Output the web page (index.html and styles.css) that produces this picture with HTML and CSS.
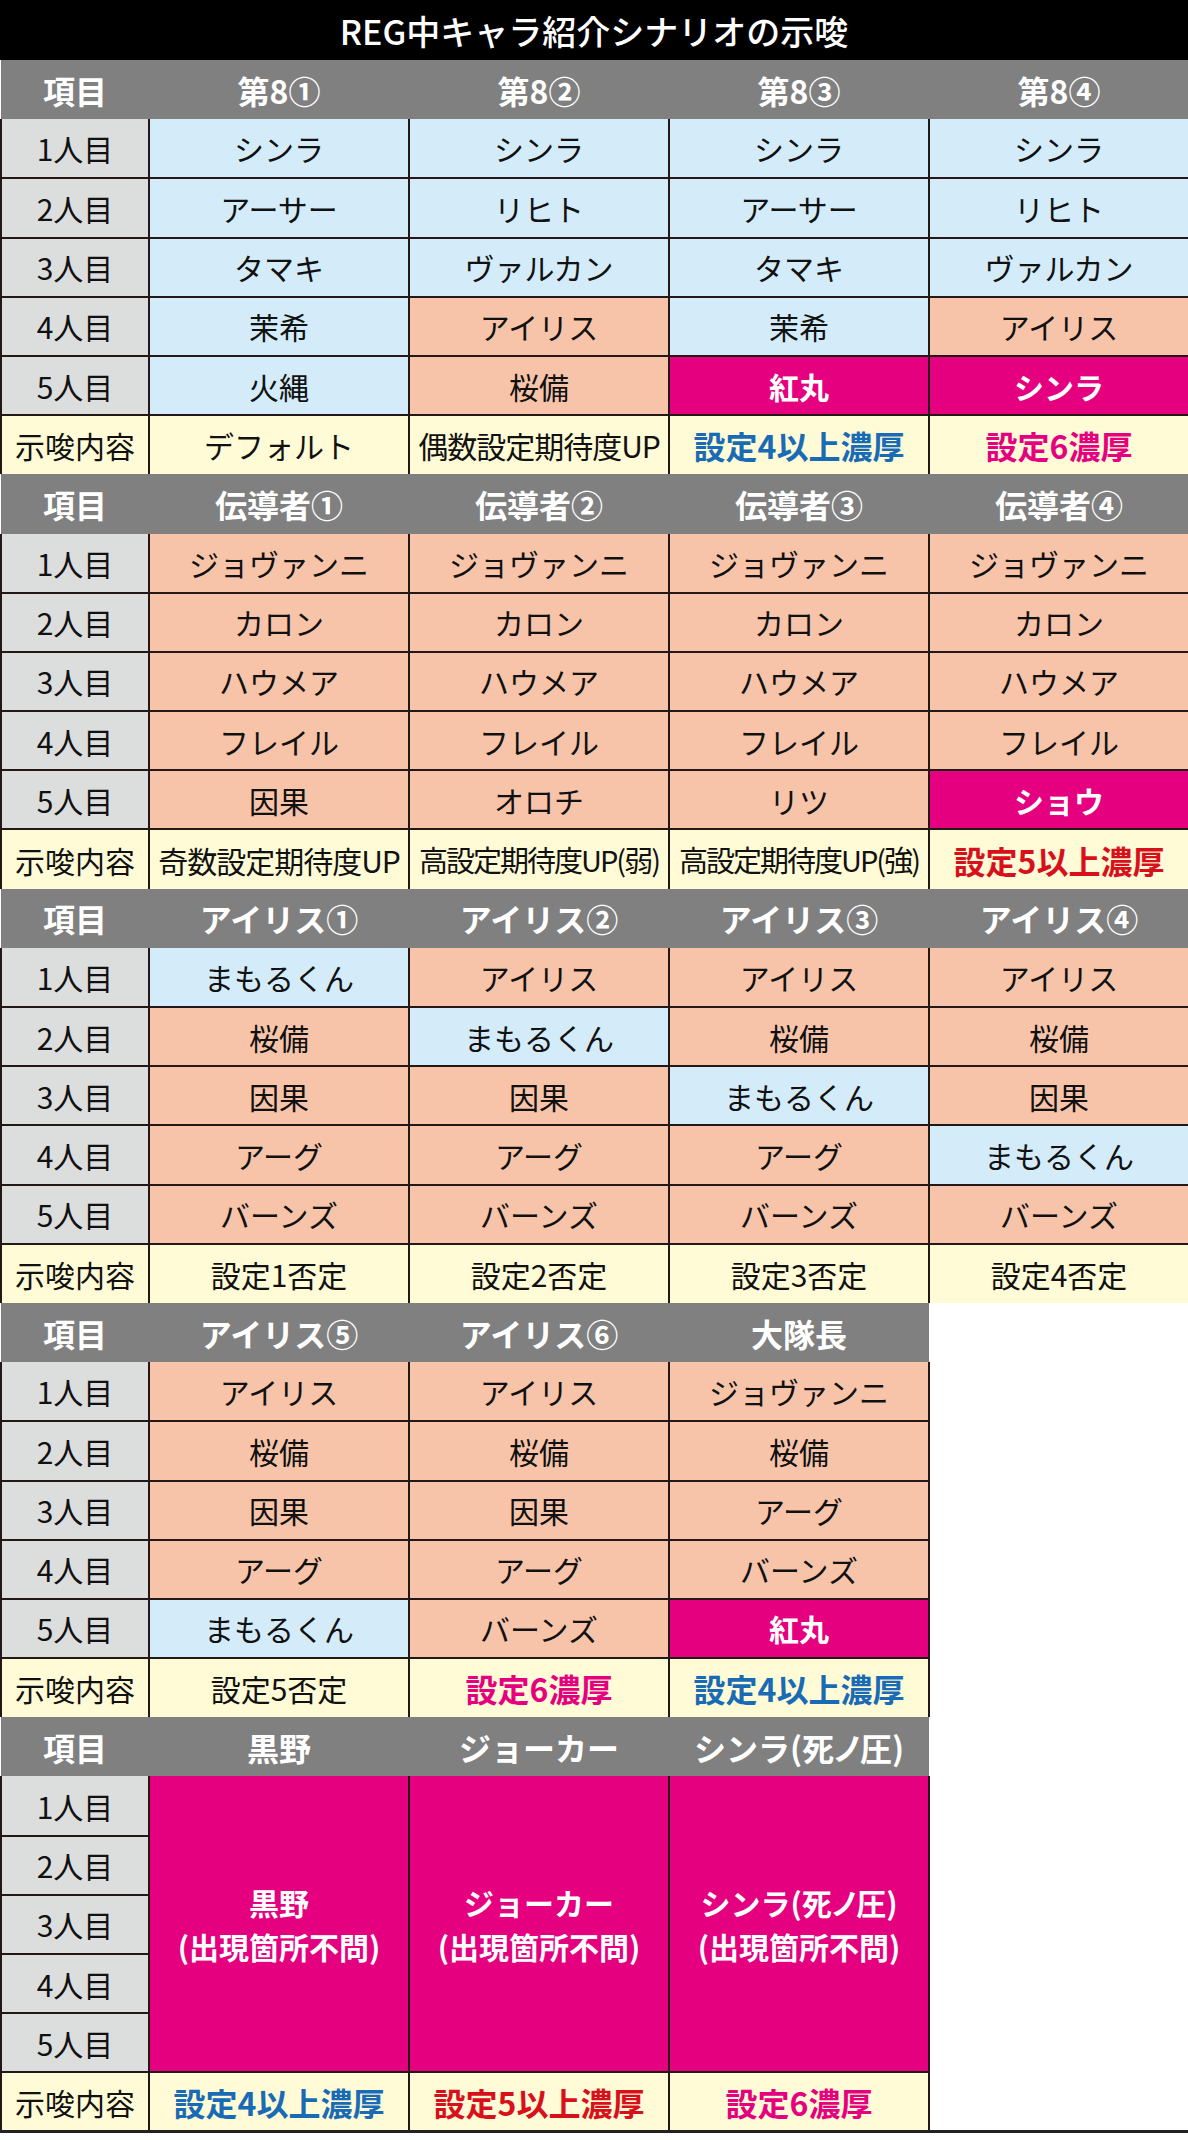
FILE: index.html
```html
<!DOCTYPE html>
<html lang="ja">
<head>
<meta charset="utf-8">
<title>REG中キャラ紹介シナリオの示唆</title>
<link rel="stylesheet" href="styles.css">
</head>
<body>
<div class="page">
  <div class="title">REG中キャラ紹介シナリオの示唆</div>
  <table class="grid">
    <colgroup>
      <col class="col-label">
      <col class="col-data">
      <col class="col-data">
      <col class="col-data">
      <col class="col-data">
    </colgroup>
    <tbody>
      <!-- Section 1 -->
      <tr class="head"><th>項目</th><th>第8①</th><th>第8②</th><th>第8③</th><th>第8④</th></tr>
      <tr><td class="lab">1人目</td><td class="b">シンラ</td><td class="b">シンラ</td><td class="b">シンラ</td><td class="b">シンラ</td></tr>
      <tr><td class="lab">2人目</td><td class="b">アーサー</td><td class="b">リヒト</td><td class="b">アーサー</td><td class="b">リヒト</td></tr>
      <tr><td class="lab">3人目</td><td class="b">タマキ</td><td class="b">ヴァルカン</td><td class="b">タマキ</td><td class="b">ヴァルカン</td></tr>
      <tr><td class="lab">4人目</td><td class="b">茉希</td><td class="s">アイリス</td><td class="b">茉希</td><td class="s">アイリス</td></tr>
      <tr><td class="lab">5人目</td><td class="b">火縄</td><td class="s">桜備</td><td class="m">紅丸</td><td class="m">シンラ</td></tr>
      <tr><td class="lab c">示唆内容</td><td class="c">デフォルト</td><td class="c tight">偶数設定期待度UP</td><td class="c t-blue">設定4以上濃厚</td><td class="c t-pink">設定6濃厚</td></tr>

      <!-- Section 2 -->
      <tr class="head"><th>項目</th><th>伝導者①</th><th>伝導者②</th><th>伝導者③</th><th>伝導者④</th></tr>
      <tr><td class="lab">1人目</td><td class="s">ジョヴァンニ</td><td class="s">ジョヴァンニ</td><td class="s">ジョヴァンニ</td><td class="s">ジョヴァンニ</td></tr>
      <tr><td class="lab">2人目</td><td class="s">カロン</td><td class="s">カロン</td><td class="s">カロン</td><td class="s">カロン</td></tr>
      <tr><td class="lab">3人目</td><td class="s">ハウメア</td><td class="s">ハウメア</td><td class="s">ハウメア</td><td class="s">ハウメア</td></tr>
      <tr><td class="lab">4人目</td><td class="s">フレイル</td><td class="s">フレイル</td><td class="s">フレイル</td><td class="s">フレイル</td></tr>
      <tr><td class="lab">5人目</td><td class="s">因果</td><td class="s">オロチ</td><td class="s">リツ</td><td class="m">ショウ</td></tr>
      <tr><td class="lab c">示唆内容</td><td class="c tight">奇数設定期待度UP</td><td class="c tighter">高設定期待度UP<span class="paren">(弱)</span></td><td class="c tighter">高設定期待度UP<span class="paren">(強)</span></td><td class="c t-red">設定5以上濃厚</td></tr>

      <!-- Section 3 -->
      <tr class="head"><th>項目</th><th>アイリス①</th><th>アイリス②</th><th>アイリス③</th><th>アイリス④</th></tr>
      <tr><td class="lab">1人目</td><td class="b">まもるくん</td><td class="s">アイリス</td><td class="s">アイリス</td><td class="s">アイリス</td></tr>
      <tr><td class="lab">2人目</td><td class="s">桜備</td><td class="b">まもるくん</td><td class="s">桜備</td><td class="s">桜備</td></tr>
      <tr><td class="lab">3人目</td><td class="s">因果</td><td class="s">因果</td><td class="b">まもるくん</td><td class="s">因果</td></tr>
      <tr><td class="lab">4人目</td><td class="s">アーグ</td><td class="s">アーグ</td><td class="s">アーグ</td><td class="b">まもるくん</td></tr>
      <tr><td class="lab">5人目</td><td class="s">バーンズ</td><td class="s">バーンズ</td><td class="s">バーンズ</td><td class="s">バーンズ</td></tr>
      <tr><td class="lab c">示唆内容</td><td class="c">設定1否定</td><td class="c">設定2否定</td><td class="c">設定3否定</td><td class="c">設定4否定</td></tr>

      <!-- Section 4 -->
      <tr class="head"><th>項目</th><th>アイリス⑤</th><th>アイリス⑥</th><th>大隊長</th><td class="blank" rowspan="14"></td></tr>
      <tr><td class="lab">1人目</td><td class="s">アイリス</td><td class="s">アイリス</td><td class="s">ジョヴァンニ</td></tr>
      <tr><td class="lab">2人目</td><td class="s">桜備</td><td class="s">桜備</td><td class="s">桜備</td></tr>
      <tr><td class="lab">3人目</td><td class="s">因果</td><td class="s">因果</td><td class="s">アーグ</td></tr>
      <tr><td class="lab">4人目</td><td class="s">アーグ</td><td class="s">アーグ</td><td class="s">バーンズ</td></tr>
      <tr><td class="lab">5人目</td><td class="b">まもるくん</td><td class="s">バーンズ</td><td class="m">紅丸</td></tr>
      <tr><td class="lab c">示唆内容</td><td class="c">設定5否定</td><td class="c t-pink">設定6濃厚</td><td class="c t-blue">設定4以上濃厚</td></tr>

      <!-- Section 5 -->
      <tr class="head"><th>項目</th><th>黒野</th><th>ジョーカー</th><th>シンラ<span class="paren">(死ノ圧)</span></th></tr>
      <tr>
        <td class="lab">1人目</td>
        <td class="m big" rowspan="5"><div class="line">黒野</div><div class="line paren">(出現箇所不問)</div></td>
        <td class="m big" rowspan="5"><div class="line">ジョーカー</div><div class="line paren">(出現箇所不問)</div></td>
        <td class="m big" rowspan="5"><div class="line">シンラ<span>(死ノ圧)</span></div><div class="line paren">(出現箇所不問)</div></td>
      </tr>
      <tr><td class="lab">2人目</td></tr>
      <tr><td class="lab">3人目</td></tr>
      <tr><td class="lab">4人目</td></tr>
      <tr><td class="lab">5人目</td></tr>
      <tr class="last"><td class="lab c">示唆内容</td><td class="c t-blue">設定4以上濃厚</td><td class="c t-red">設定5以上濃厚</td><td class="c t-pink">設定6濃厚</td></tr>
    </tbody>
  </table>
</div>
</body>
</html>
```

FILE: styles.css
```css
html, body {
  margin: 0;
  padding: 0;
  background: #ffffff;
}

body {
  font-family: "Noto Sans CJK JP", "Noto Sans", sans-serif;
  color: #111;
}

.page {
  width: 1188px;
  display: flex;
  flex-direction: column;
}

.title {
  height: 60px;
  background: #000;
  color: #fff;
  font-size: 34px;
  font-weight: 500;
  display: flex;
  align-items: center;
  justify-content: center;
}

.grid {
  width: 1188px;
  table-layout: fixed;
  border-collapse: collapse;
  border-right: 2px solid #222;
  border-bottom: 3px solid #222;
}

.col-label { width: 148px; }
.col-data { width: 260px; }

.grid tr { height: 59.2px; }

.grid td {
  border: 2px solid #231815;
  padding: 0;
  text-align: center;
  vertical-align: middle;
  font-size: 30px;
  line-height: 1;
  white-space: nowrap;
  overflow: hidden;
}

.grid th {
  border: hidden;
  background: #808080;
  color: #fff;
  font-weight: 700;
  font-size: 32px;
  line-height: 1;
  padding: 0;
  text-align: center;
  vertical-align: middle;
  white-space: nowrap;
}

.lab { background: #dcdddd; }
.b { background: #d4ecfa; }
.s { background: #f7c4a9; }
.m { background: #e4007f; color: #fff; font-weight: 700; }
.c { background: #fffbd6; }
.lab.c { background: #fffbd6; }

.grid td.t-blue { color: #1a6bb5; font-weight: 700; font-size: 32px; }
.grid td.t-pink { color: #e4007f; font-weight: 700; font-size: 32px; }
.grid td.t-red { color: #d8101c; font-weight: 700; font-size: 32px; }

.grid td.tight { letter-spacing: -1px; }
.grid td.tighter { letter-spacing: -2px; font-size: 29px; }

.paren { font-feature-settings: "palt" 1; }

.grid td.big { font-size: 30px; line-height: 44px; }
.big .line { display: block; line-height: 44px; height: 44px; }
.big .line span { font-feature-settings: "palt" 1; }

.blank {
  background: #fff;
  border-top: hidden !important;
  border-left: 2px solid #231815;
}
```
